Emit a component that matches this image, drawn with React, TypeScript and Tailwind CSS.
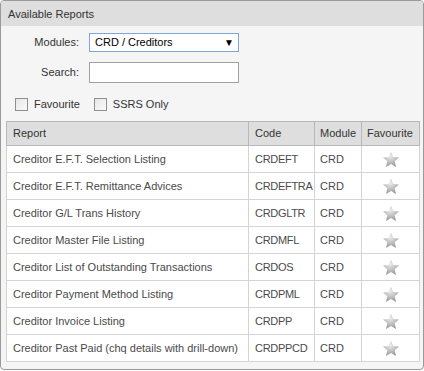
import { useState } from 'react';

interface Report {
  name: string;
  code: string;
  module: string;
}

const reports: Report[] = [
  { name: 'Creditor E.F.T. Selection Listing', code: 'CRDEFT', module: 'CRD' },
  { name: 'Creditor E.F.T. Remittance Advices', code: 'CRDEFTRA', module: 'CRD' },
  { name: 'Creditor G/L Trans History', code: 'CRDGLTR', module: 'CRD' },
  { name: 'Creditor Master File Listing', code: 'CRDMFL', module: 'CRD' },
  { name: 'Creditor List of Outstanding Transactions', code: 'CRDOS', module: 'CRD' },
  { name: 'Creditor Payment Method Listing', code: 'CRDPML', module: 'CRD' },
  { name: 'Creditor Invoice Listing', code: 'CRDPP', module: 'CRD' },
  { name: 'Creditor Past Paid (chq details with drill-down)', code: 'CRDPPCD', module: 'CRD' },
];

// Grey star used in the Favourite column
function Star({ id }: { id: string }) {
  return (
    <svg width="18" height="17" viewBox="0 0 24 23" className="mx-auto block">
      <defs>
        <radialGradient id={id} cx="45%" cy="30%" r="75%">
          <stop offset="0%" stopColor="#ececec" />
          <stop offset="55%" stopColor="#bcbcbc" />
          <stop offset="100%" stopColor="#909090" />
        </radialGradient>
      </defs>
      <path
        d="M12 1 L15.1 8.1 L22.8 8.8 L17 13.9 L18.7 21.5 L12 17.5 L5.3 21.5 L7 13.9 L1.2 8.8 L8.9 8.1 Z"
        fill={`url(#${id})`}
      />
    </svg>
  );
}

function Checkbox({ label }: { label: string }) {
  return (
    <label className="flex items-center gap-[6px]">
      <span className="w-[13px] h-[13px] border border-[#8f8f8f] bg-gradient-to-br from-[#e6e6e6] to-[#fbfbfb]"></span>
      <span>{label}</span>
    </label>
  );
}

export default function App() {
  const [search, setSearch] = useState('');

  return (
    <div className="w-[424px] h-[371px] bg-white font-['Liberation_Sans',Arial,sans-serif] text-[11px] text-[#333]">
      <div className="h-[370px] border border-[#9a9a9a] rounded-[4px] bg-[#f5f5f5] overflow-hidden flex flex-col">
        {/* Panel title */}
        <div className="h-[25px] shrink-0 bg-[#dedede] px-[7px] pt-[2px] flex items-center text-[#333]">
          Available Reports
        </div>

        {/* Filters */}
        <div className="pt-[7px] pl-[14px] grid grid-cols-[64px_150px] gap-x-[10px] items-center">
          <span className="text-right">Modules:</span>
          <div className="h-[19px] border border-[#7ea6dc] bg-white flex items-center justify-between pl-[5px] pr-[4px] text-black">
            <span>CRD / Creditors</span>
            <span className="text-[10px]">▼</span>
          </div>
          <span className="text-right mt-[10px]">Search:</span>
          <input
            value={search}
            onChange={(e) => setSearch(e.target.value)}
            className="mt-[10px] h-[21px] border border-[#a0a0a0] bg-white px-1 outline-none"
          />
        </div>

        <div className="flex items-center gap-[14px] pl-[14px] mt-[14px] h-[14px]">
          <Checkbox label="Favourite" />
          <Checkbox label="SSRS Only" />
        </div>

        {/* Reports table */}
        <div className="px-[5px] mt-[10px]">
          <table className="w-[413px] border-collapse border border-[#a8a8a8] table-fixed">
            <colgroup>
              <col className="w-[242px]" />
              <col className="w-[66px]" />
              <col className="w-[47px]" />
              <col className="w-[58px]" />
            </colgroup>
            <thead>
              <tr className="h-[24px] bg-[#dedede] text-[#333]">
                <th className="font-normal text-left px-[6px] border border-[#b8b8b8]">Report</th>
                <th className="font-normal text-left px-[6px] border border-[#b8b8b8]">Code</th>
                <th className="font-normal text-left px-[5px] border border-[#b8b8b8]">Module</th>
                <th className="font-normal text-left px-[5px] border border-[#b8b8b8]">Favourite</th>
              </tr>
            </thead>
            <tbody className="bg-white text-[#4a4a4a]">
              {reports.map((r, i) => (
                <tr key={r.code} className="h-[27px]">
                  <td className="px-[6px] border border-[#d4d4d4] whitespace-nowrap">{r.name}</td>
                  <td className="pl-[6px] pr-0 border border-[#d4d4d4] whitespace-nowrap tracking-[-0.3px]">{r.code}</td>
                  <td className="px-[5px] border border-[#d4d4d4]">{r.module}</td>
                  <td className="border border-[#d4d4d4]">
                    <Star id={`star-${i}`} />
                  </td>
                </tr>
              ))}
            </tbody>
          </table>
        </div>
      </div>
    </div>
  );
}
